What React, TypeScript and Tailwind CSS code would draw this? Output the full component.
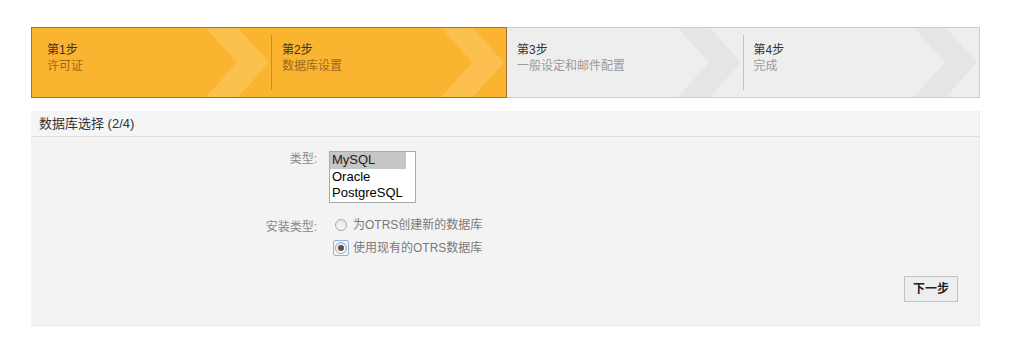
import React from "react";

interface Step {
    title: string;
    label: string;
}

const STEPS: Step[] = [
    { title: "第1步", label: "许可证" },
    { title: "第2步", label: "数据库设置" },
    { title: "第3步", label: "一般设定和邮件配置" },
    { title: "第4步", label: "完成" },
];

const FONT = { fontFamily: '"Liberation Sans", Arial, "Noto Sans CJK SC", sans-serif' };

const Chevron = ({ fill }: { fill: string }) => (
    <svg
        className="absolute right-[1px] top-0 h-full"
        width="64"
        viewBox="0 0 64 69"
        preserveAspectRatio="none"
    >
        <polygon points="0,0 32,0 63,34.5 32,69 0,69 31,34.5" fill={fill} />
    </svg>
);

const StepItem = ({ step, active, first }: { step: Step; active: boolean; first?: boolean }) => (
    <div className={`relative flex-1 pt-[14px] ${first ? "pl-[15px]" : "pl-[10px]"}`}>
        <Chevron fill={active ? "#fcc04f" : "#e5e5e5"} />
        <div className="relative text-[12px] leading-[16px]">
            <div className="text-[#333]">{step.title}</div>
            <div className={active ? "text-[#9c6a1e]" : "text-[#9a9a9a]"}>{step.label}</div>
        </div>
    </div>
);

const Radio = ({ checked }: { checked?: boolean }) => (
    <span
        className={`flex h-[16px] w-[16px] items-center justify-center rounded-[2px] border ${
            checked ? "border-[#8fb8ea]" : "border-transparent"
        }`}
    >
        <span className="flex h-[12px] w-[12px] items-center justify-center rounded-full border border-[#a8a8a8] bg-gradient-to-b from-[#e4e4e4] to-[#fbfbfb]">
            {checked && <span className="h-[6px] w-[6px] rounded-full bg-[#555]" />}
        </span>
    </span>
);

export default function App() {
    return (
        <div className="min-h-[347px] w-[1017px] bg-white pt-[27px] pl-[31px]" style={FONT}>
            {/* steps bar */}
            <div className="flex h-[71px] w-[949px]">
                <div className="flex w-[476px] border border-[#a6712c] bg-[#fbb42f]">
                    <StepItem step={STEPS[0]} active first />
                    <div className="my-[7px] w-px bg-[#c98f23]" />
                    <StepItem step={STEPS[1]} active />
                </div>
                <div className="flex flex-1 border border-l-0 border-[#cdcdcd] bg-[#eeeeee]">
                    <StepItem step={STEPS[2]} active={false} />
                    <div className="my-[7px] w-px bg-[#c2c2c2]" />
                    <StepItem step={STEPS[3]} active={false} />
                </div>
            </div>

            {/* panel */}
            <div className="mt-[13px] h-[215px] w-[949px] border-r border-b border-[#e9e9e9] bg-[#f3f3f3]">
                <div className="h-[26px] border-b border-[#dedede] bg-[#f5f5f5] pl-[8px] text-[13px] leading-[26px] text-[#333]">
                    数据库选择 (2/4)
                </div>
                <div className="pt-[14px]">
                    <div className="flex">
                        <div className="w-[287px] pr-[1px] text-right text-[12px] leading-[16px] text-[#8a8a8a]">类型:</div>
                        <div className="ml-[11px] h-[52px] w-[87px] border border-[#a9a9a9] bg-white text-[13px] leading-[16.5px] text-black">
                            <div className="w-[76px] bg-[#c6c6c6] pl-[2px] text-[#222]">MySQL</div>
                            <div className="pl-[2px]">Oracle</div>
                            <div className="pl-[2px]">PostgreSQL</div>
                        </div>
                    </div>
                    <div className="mt-[13px] flex">
                        <div className="w-[287px] pr-[1px] pt-[3px] text-right text-[12px] leading-[16px] text-[#8a8a8a]">安装类型:</div>
                        <div className="ml-[15px] flex flex-col gap-[5px] text-[12px] text-[#7a7a7a]">
                            <div className="flex items-center gap-[4px]">
                                <Radio />
                                <span>为OTRS创建新的数据库</span>
                            </div>
                            <div className="flex items-center gap-[4px]">
                                <Radio checked />
                                <span>使用现有的OTRS数据库</span>
                            </div>
                        </div>
                    </div>
                    <div className="mt-[19px] flex justify-end pr-[21px]">
                        <button className="h-[26px] w-[54px] border border-[#c4c4c4] bg-[#eeeeee] text-[12px] font-bold text-[#222]">
                            下一步
                        </button>
                    </div>
                </div>
            </div>
        </div>
    );
}
